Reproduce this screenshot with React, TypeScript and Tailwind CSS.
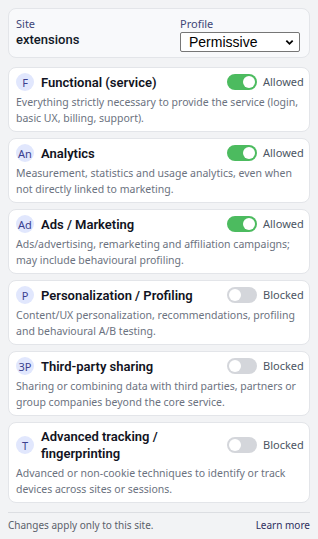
import { useState } from 'react'

type Category = {
  id: string
  badge: string
  title: string
  desc: string
  allowed: boolean
}

const categories: Category[] = [
  {
    id: 'functional',
    badge: 'F',
    title: 'Functional (service)',
    desc: 'Everything strictly necessary to provide the service (login, basic UX, billing, support).',
    allowed: true,
  },
  {
    id: 'analytics',
    badge: 'An',
    title: 'Analytics',
    desc: 'Measurement, statistics and usage analytics, even when not directly linked to marketing.',
    allowed: true,
  },
  {
    id: 'ads',
    badge: 'Ad',
    title: 'Ads / Marketing',
    desc: 'Ads/advertising, remarketing and affiliation campaigns; may include behavioural profiling.',
    allowed: true,
  },
  {
    id: 'personalization',
    badge: 'P',
    title: 'Personalization / Profiling',
    desc: 'Content/UX personalization, recommendations, profiling and behavioural A/B testing.',
    allowed: false,
  },
  {
    id: 'sharing',
    badge: '3P',
    title: 'Third-party sharing',
    desc: 'Sharing or combining data with third parties, partners or group companies beyond the core service.',
    allowed: false,
  },
  {
    id: 'tracking',
    badge: 'T',
    title: 'Advanced tracking / fingerprinting',
    desc: 'Advanced or non-cookie techniques to identify or track devices across sites or sessions.',
    allowed: false,
  },
]

function Toggle({ on, onClick }: { on: boolean; onClick: () => void }) {
  return (
    <button
      onClick={onClick}
      className={`relative h-4 w-[30px] shrink-0 rounded-full ${on ? 'bg-[#4cbb5f]' : 'bg-[#d4d6db]'}`}
    >
      <span
        className={`absolute top-[2px] h-3 w-3 rounded-full bg-white ${on ? 'left-[16px]' : 'left-[2px]'}`}
      />
    </button>
  )
}

export default function App() {
  const [state, setState] = useState<Record<string, boolean>>(
    Object.fromEntries(categories.map((c) => [c.id, c.allowed]))
  )

  return (
    <div className="min-h-[539px] w-[318px] bg-[#f2f3f5] px-2 pt-2 font-['Noto_Sans',sans-serif] text-[#111827]">
      <div className="flex items-start justify-between rounded-lg border border-[#e3e5e9] bg-[#f8f9fb] pb-[5px] pl-[7px] pr-2 pt-[6px]">
        <div className="pt-[1px]">
          <div className="text-[11px] leading-[15px] text-[#3f4778]">Site</div>
          <div className="font-['Roboto',sans-serif] text-[13px] font-medium leading-[18px]">
            extensions
          </div>
        </div>
        <div className="mr-[1px] w-[120px]">
          <div className="pt-[1px] text-[11px] leading-[15px] text-[#3f4778]">Profile</div>
          <div className="relative mt-[1px] h-5 rounded-[2px] border border-[#767676] bg-white">
            <span className="absolute left-2 top-[1px] font-['Liberation_Sans',sans-serif] text-[14px] leading-4 text-black">
              Permissive
            </span>
            <svg
              viewBox="0 0 10 10"
              className="absolute right-[5px] top-[5px] h-[9px] w-[9px]"
            >
              <path d="M1.5 3 L5 6.5 L8.5 3" fill="none" stroke="#000" strokeWidth="2" />
            </svg>
          </div>
        </div>
      </div>

      <div className="mt-[9px] flex flex-col gap-[6px]">
        {categories.map((c) => {
          const on = state[c.id]
          return (
            <div
              key={c.id}
              className="rounded-lg border border-[#e3e5e9] bg-white pb-[5px] pl-[7px] pr-2 pt-[5px]"
            >
              <div className="flex items-center">
                <span className="flex h-[18px] w-[18px] shrink-0 items-center justify-center rounded-full bg-[#e1e7fd] text-[11px] leading-none text-[#3b3f8f]">
                  {c.badge}
                </span>
                <span className="ml-[7px] mr-6 flex-1 font-['Roboto',sans-serif] text-[13px] font-semibold leading-[17px] text-[#111322]">
                  {c.title}
                </span>
                <Toggle
                  on={on}
                  onClick={() => setState((s) => ({ ...s, [c.id]: !s[c.id] }))}
                />
                <span className="ml-[6px] w-[38px] text-[11px] text-[#4b5563]">
                  {on ? 'Allowed' : 'Blocked'}
                </span>
              </div>
              <p className="mt-[3px] text-[10.5px] leading-4 text-[#6b7280]">{c.desc}</p>
            </div>
          )
        })}
      </div>

      <div className="mt-[9px] flex items-center justify-between border-t border-[#dcdee2] pb-2 pt-[5px] text-[10px]">
        <span className="text-[#5b616b]">Changes apply only to this site.</span>
        <span className="text-[#2e2f5e]">Learn more</span>
      </div>
    </div>
  )
}
